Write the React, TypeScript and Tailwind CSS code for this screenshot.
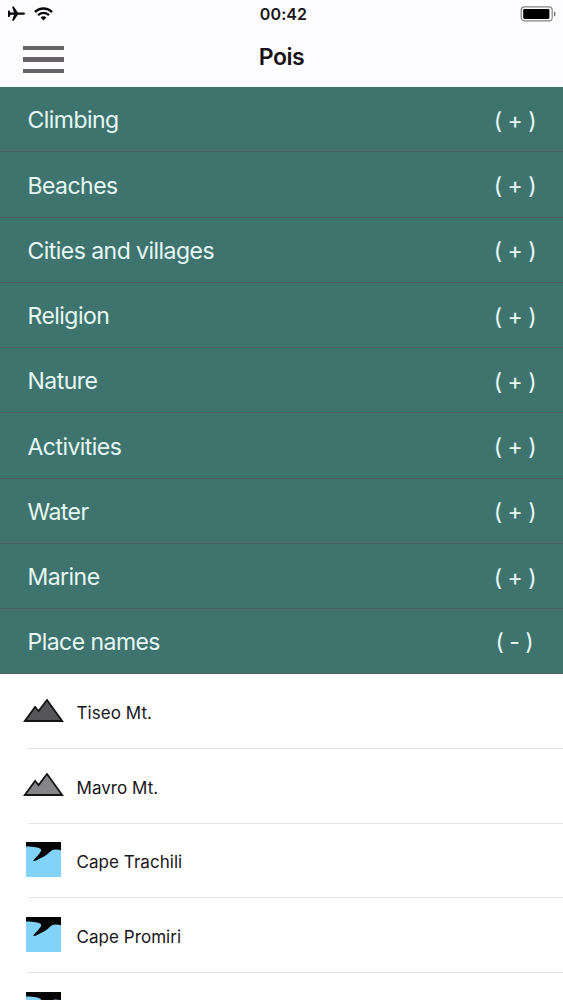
import React from "react";

const categories = [
  { name: "Climbing", open: false },
  { name: "Beaches", open: false },
  { name: "Cities and villages", open: false },
  { name: "Religion", open: false },
  { name: "Nature", open: false },
  { name: "Activities", open: false },
  { name: "Water", open: false },
  { name: "Marine", open: false },
  { name: "Place names", open: true },
];

const places = [
  { name: "Tiseo Mt.", icon: "mountain", fill: "#565557" },
  { name: "Mavro Mt.", icon: "mountain", fill: "#858486" },
  { name: "Cape Trachili", icon: "cape", fill: "#81d3fa" },
  { name: "Cape Promiri", icon: "cape", fill: "#81d3fa" },
  { name: "", icon: "cape", fill: "#81d3fa" },
];

const MountainIcon = ({ fill }: { fill: string }) => (
  <svg width="41" height="24" viewBox="0 0 41 24" className="-mt-[1px] -ml-[5px]">
    <path
      d="M1.8 22 L12.1 8 L15.6 12 L24 1 L39.2 22 Z"
      fill={fill}
      stroke="#151415"
      strokeWidth="1.8"
    />
  </svg>
);

const CapeIcon = ({ fill }: { fill: string }) => (
  <svg width="35" height="35" viewBox="0 0 35 35" className="-mt-px -ml-[2px]">
    <rect width="35" height="35" fill={fill} />
    <path
      d="M0 0 H35 V8.3 C32.5 7.6 29 6.9 26.5 8 C23.5 9.8 21.5 12.6 18 14.4 C14.5 16 11.5 18 8.4 19 C7.2 19.3 7 18.5 8 17.4 C10.5 15 12.6 13 13.9 10.8 C15 9 15.8 8.4 14.8 7.2 C13 5.4 6 4.4 0 4.6 Z"
      fill="#050505"
    />
  </svg>
);

const StatusBar = () => (
  <div className="grid h-7 grid-cols-3 items-center px-[7px]">
    <div className="flex items-center gap-[9px]">
      <svg width="18" height="16" viewBox="0 0 18 16">
        <path
          d="M18 7.7 C18 8.5 17 8.8 16 8.8 H10.8 L6.8 14.8 H5 L7 8.8 H3.6 L2.4 11 H1 V4.4 H2.4 L3.6 6.6 H7 L5 0.6 H6.8 L10.8 6.6 H16 C17 6.6 18 6.9 18 7.7 Z"
          fill="#0b0b0d"
        />
      </svg>
      <svg width="19" height="14" viewBox="0 0 19 14">
        <path d="M1 5 C5.8 0.2 13.2 0.2 18 5" fill="none" stroke="#050507" strokeWidth="2.5" />
        <path d="M4 8.2 C7.1 5.2 11.9 5.2 15 8.2" fill="none" stroke="#050507" strokeWidth="2.3" />
        <path d="M9.5 13.4 L6.6 10.4 C8.2 9 10.8 9 12.4 10.4 Z" fill="#050507" />
      </svg>
    </div>
    <span className="pl-1 text-center text-[16px] leading-7 font-semibold tracking-[0.1px]">00:42</span>
    <div className="flex justify-end">
      <svg width="36" height="16" viewBox="0 0 36 16">
        <rect x="1.2" y="0.9" width="31" height="14" rx="3.5" fill="none" stroke="#858387" strokeWidth="1.2" />
        <rect x="3.2" y="2.9" width="26.2" height="10" rx="1.3" fill="#000" />
        <path d="M34 5.5 C36 6 36 9.8 34 10.3 Z" fill="#69676b" />
      </svg>
    </div>
  </div>
);

const App = () => {
  return (
    <div className="h-screen w-full overflow-hidden bg-white font-[Inter,sans-serif] text-[#171518]">
      <header className="h-[87px] bg-[#fdfcfe]">
        <StatusBar />
        <div className="grid grid-cols-3 items-center px-[23px]">
          <button className="mt-[5px] flex w-[41px] flex-col gap-[7px]" aria-label="Menu">
            <span className="h-[4.4px] w-full bg-[#656366]" />
            <span className="h-[4.4px] w-full bg-[#656366]" />
            <span className="h-[4.4px] w-full bg-[#656366]" />
          </button>
          <h1 className="text-center text-[23px] leading-[58px] font-semibold tracking-[-0.4px]">Pois</h1>
        </div>
      </header>

      <ul>
        {categories.map((category) => (
          <li
            key={category.name}
            className="flex h-[65.25px] items-center justify-between border-b-[1.5px] border-[#4f5c5f] bg-[#3f746e] pt-[3px] pr-[27px] pl-[27.5px] text-[23px] tracking-[-0.54px] text-[#e6f8f6]"
          >
            <span>{category.name}</span>
            {category.open ? (
              <span className="pr-[3px]">( - )</span>
            ) : (
              <span className="pt-px">( + )</span>
            )}
          </li>
        ))}
      </ul>

      <ul className="pl-7">
        {places.map((place, index) => (
          <li key={index} className="flex h-[74.7px] items-center border-b border-[#e5e4e6]">
            <div className="flex w-[48.5px] items-center">
              {place.icon === "mountain" ? <MountainIcon fill={place.fill} /> : <CapeIcon fill={place.fill} />}
            </div>
            <span className="pt-[5px] text-[17px] tracking-[0.05px]">{place.name}</span>
          </li>
        ))}
      </ul>
    </div>
  );
};

export default App;
